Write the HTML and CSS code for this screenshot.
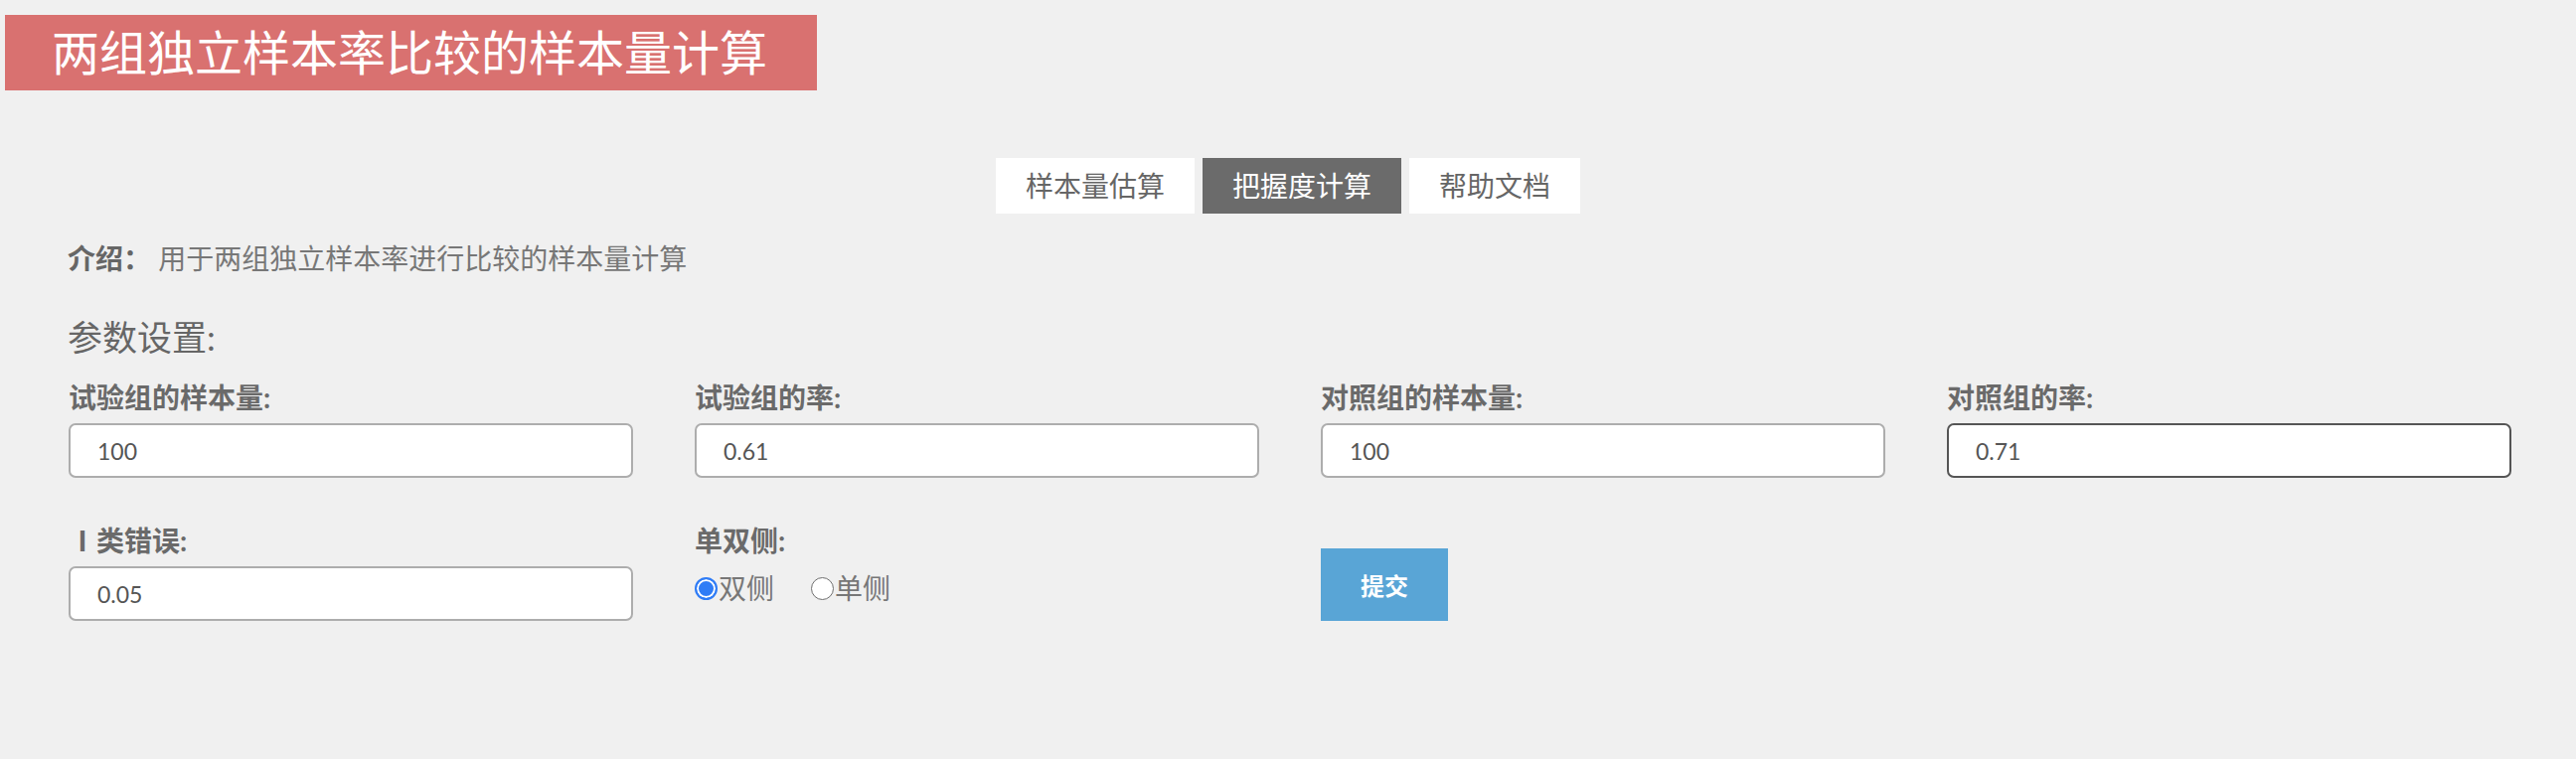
FILE: index.html
```html
<!DOCTYPE html>
<html>
<head>
    <title>两组独立样本率比较的样本量计算</title>
    <meta charset="utf-8">
    <meta name="viewport" content="width=device-width, initial-scale=1">
    <link rel="stylesheet" href="styles.css">
</head>
<body>
    <div class="header">
        <h1 class="title">两组独立样本率比较的样本量计算</h1>
    </div>

    <div class="tabs">
        <a class="tab" href="#">样本量估算</a>
        <a class="tab active" href="#">把握度计算</a>
        <a class="tab" href="#">帮助文档</a>
    </div>

    <div class="container">
        <p class="intro"><b>介绍：</b> 用于两组独立样本率进行比较的样本量计算</p>
        <h3 class="section">参数设置:</h3>

        <form id="paramForm" class="params">
            <div class="field">
                <label>试验组的样本量:</label>
                <input type="text" name="n1" value="100">
            </div>
            <div class="field">
                <label>试验组的率:</label>
                <input type="text" name="p1" value="0.61">
            </div>
            <div class="field">
                <label>对照组的样本量:</label>
                <input type="text" name="n2" value="100">
            </div>
            <div class="field">
                <label>对照组的率:</label>
                <input type="text" name="p2" value="0.71" class="focused">
            </div>

            <div class="field">
                <label>Ⅰ类错误:</label>
                <input type="text" name="alpha" value="0.05">
            </div>
            <div class="field">
                <label>单双侧:</label>
                <div class="radios">
                    <label class="radio"><input type="radio" name="side" value="2" checked>双侧</label>
                    <label class="radio"><input type="radio" name="side" value="1">单侧</label>
                </div>
            </div>
            <div class="field">
                <button type="submit" class="submit">提交</button>
            </div>
        </form>
    </div>
</body>
</html>
```

FILE: styles.css
```css
body {
    font-family: Lato, "Noto Sans CJK SC", sans-serif;
    background-color: #f0f0f0;
    margin: 0;
    padding: 0;
    min-height: 764px;
    color: #666;
}
.header {
    padding: 15px 0 0 5px;
}
.title {
    display: inline-block;
    margin: 0;
    padding: 0 50px 0 47px;
    height: 76px;
    line-height: 76px;
    font-size: 48px;
    font-weight: normal;
    color: #fff;
    background-color: #d97170;
}
.tabs {
    display: flex;
    justify-content: center;
    gap: 8px;
    margin-top: 68px;
}
.tab {
    display: block;
    height: 56px;
    line-height: 56px;
    padding: 0 30px;
    font-size: 28px;
    color: #666;
    background-color: #fff;
    text-decoration: none;
}
.tab.active {
    background-color: #6b6b6b;
    color: #fff;
}
.container {
    padding-left: 68px;
}
.intro {
    margin: 25px 0 0 0;
    line-height: 40px;
    font-size: 28px;
    color: #777;
}
.intro b {
    color: #666;
}
.section {
    margin: 35px 0 0 0;
    line-height: 48px;
    font-size: 35px;
    font-weight: normal;
    color: #666;
}
.params {
    display: grid;
    grid-template-columns: repeat(4, 630px);
    row-gap: 45px;
    margin-top: 19px;
    padding-left: 1px;
}
.field label {
    display: block;
    line-height: 36px;
    margin-bottom: 8px;
    font-size: 28px;
    font-weight: bold;
    color: #6a6a6a;
}
.field input[type="text"] {
    box-sizing: border-box;
    width: 568px;
    height: 55px;
    padding: 0 27px;
    font-family: Lato, sans-serif;
    font-size: 23px;
    color: #555;
    background-color: #fff;
    border: 2px solid #adadad;
    border-radius: 7px;
    outline: none;
}
.field input.focused {
    border-color: #555;
}
.radios {
    display: flex;
    align-items: center;
    height: 44px;
    gap: 37px;
}
.field .radio {
    display: flex;
    align-items: center;
    margin: 0;
    font-weight: normal;
    font-size: 28px;
    color: #777;
}
.radio input {
    appearance: none;
    box-sizing: border-box;
    width: 23px;
    height: 23px;
    margin: 0 1px 0 0;
    border: 1.5px solid #6f6f6f;
    border-radius: 50%;
    background-color: #fff;
}
.radio input:checked {
    border: 2px solid #2f7cf6;
    background-color: #2f7cf6;
    box-shadow: inset 0 0 0 2px #fff;
}
.submit {
    margin-top: 26px;
    width: 128px;
    height: 73px;
    border: none;
    background-color: #59a5d6;
    color: #fff;
    font-family: Lato, "Noto Sans CJK SC", sans-serif;
    font-size: 24px;
    font-weight: bold;
    cursor: pointer;
}
```
